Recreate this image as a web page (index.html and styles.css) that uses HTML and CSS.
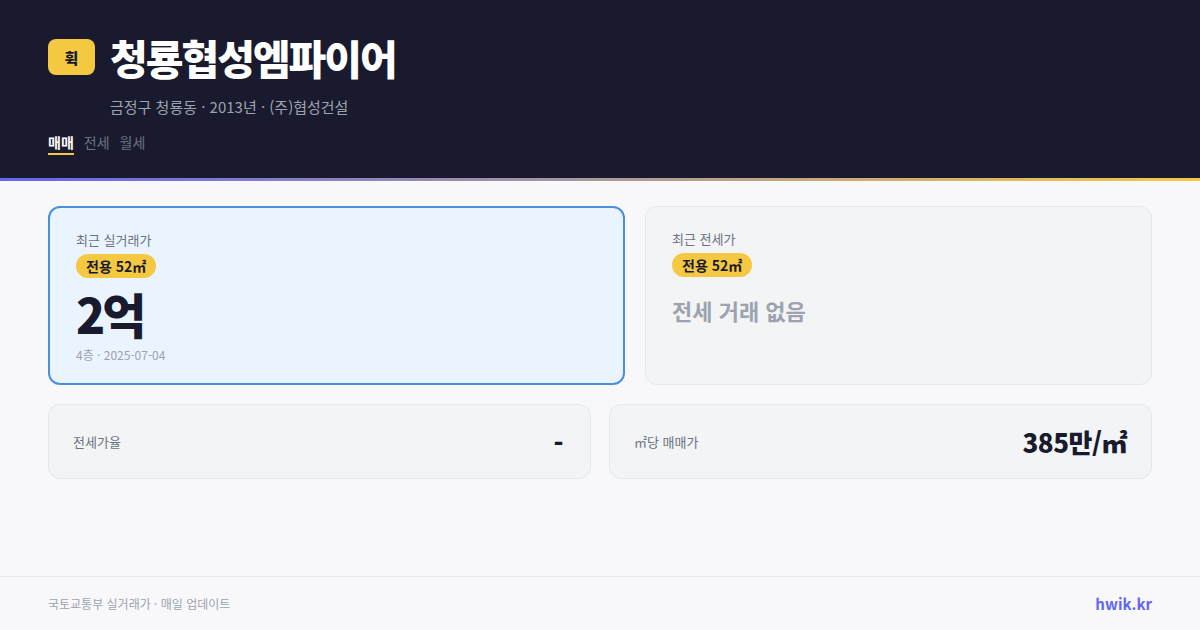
FILE: index.html
```html
<!DOCTYPE html>
<html lang="ko">
<head>
<meta charset="utf-8">
<link rel="stylesheet" href="styles.css">
</head>
<body>
<div class="page">
  <header class="hero">
    <div class="title-row">
      <div class="logo">휙</div>
      <h1 class="title">청룡협성엠파이어</h1>
    </div>
    <div class="sub">금정구 청룡동 · 2013년 · (주)협성건설</div>
    <nav class="tabs">
      <span class="tab active">매매</span>
      <span class="tab">전세</span>
      <span class="tab">월세</span>
    </nav>
  </header>
  <div class="accent"></div>
  <main class="content">
    <div class="row-top">
      <section class="card card-main">
        <div class="label">최근 실거래가</div>
        <span class="badge">전용 52㎡</span>
        <div class="price">2억</div>
        <div class="meta">4층 · 2025-07-04</div>
      </section>
      <section class="card card-alt">
        <div class="label">최근 전세가</div>
        <span class="badge">전용 52㎡</span>
        <div class="empty">전세 거래 없음</div>
      </section>
    </div>
    <div class="row-bottom">
      <section class="stat">
        <span class="stat-label">전세가율</span>
        <span class="stat-value dash">-</span>
      </section>
      <section class="stat">
        <span class="stat-label">㎡당 매매가</span>
        <span class="stat-value">385만/㎡</span>
      </section>
    </div>
  </main>
  <footer class="footer">
    <span class="source">국토교통부 실거래가 · 매일 업데이트</span>
    <span class="brand">hwik.kr</span>
  </footer>
</div>
</body>
</html>
```
FILE: styles.css
```css
* { box-sizing: border-box; margin: 0; padding: 0; }
html, body { width: 1200px; height: 630px; overflow: hidden; }
body {
  background: #f8f8fa;
  font-family: "Noto Sans CJK KR", "Noto Sans", sans-serif;
  color: #1a1a2e;
}
.page { display: flex; flex-direction: column; height: 630px; }
.hero {
  background: #1a1a2e;
  padding: 32px 48px 0;
  height: 178px;
}
.title-row { display: flex; align-items: center; gap: 15px; }
.logo {
  width: 47px; height: 36px;
  background: #f5c842;
  border-radius: 8px;
  display: flex; align-items: center; justify-content: center;
  font-size: 15px; font-weight: 900; color: #1a1a2e;
}
.title {
  font-size: 41px; font-weight: 900; color: #fff;
  letter-spacing: -2px; line-height: 50px;
}
.sub {
  margin: 15px 0 0 62px;
  font-size: 15px; color: #9ca3af; line-height: 20px;
}
.tabs { display: flex; gap: 10px; margin-top: 15px; }
.tab { font-size: 14px; color: #6b7280; line-height: 20px; padding-bottom: 1px; }
.tab.active { color: #fff; font-weight: 700; border-bottom: 2px solid #f5c842; }
.accent { height: 3px; background: linear-gradient(90deg, #6366f1, #f5c842); }
.content { flex: 1; padding: 25px 48px 0; display: flex; flex-direction: column; gap: 19px; }
.row-top { display: grid; grid-template-columns: 577fr 507fr; gap: 20px; }
.card {
  height: 179px;
  border-radius: 12px;
  padding: 23px 26px;
  display: flex; flex-direction: column; align-items: flex-start;
}
.card-main { background: #eaf4ff; border: 2px solid #4a90d9; }
.card-alt { background: #f3f4f6; border: 1px solid #e5e7eb; padding: 23px 26px; }
.label { font-size: 13px; color: #6b7280; line-height: 18px; }
.badge {
  margin-top: 5px;
  background: #f5c842; color: #1a1a2e;
  font-size: 14px; font-weight: 700;
  border-radius: 12px; padding: 0 10px; line-height: 24px;
}
.price { font-size: 48px; font-weight: 900; line-height: 62px; letter-spacing: -3px; margin-top: 4px; }
.meta { font-size: 12px; color: #9ca3af; line-height: 16px; margin-top: 3px; }
.empty { font-size: 22px; font-weight: 700; color: #9ca3af; margin-top: 18px; line-height: 30px; }
.row-bottom { display: grid; grid-template-columns: 1fr 1fr; gap: 18px; }
.stat {
  height: 75px;
  background: #f3f4f6; border: 1px solid #e5e7eb; border-radius: 12px;
  padding: 0 24px;
  display: flex; align-items: center; justify-content: space-between;
}
.stat-label { font-size: 13px; color: #6b7280; }
.stat-value { font-size: 26px; font-weight: 900; color: #1a1a2e; letter-spacing: -0.5px; }
.stat-value.dash { margin-right: 3px; }
.footer {
  height: 54px;
  border-top: 1px solid #e5e7eb;
  padding: 0 48px;
  display: flex; align-items: center; justify-content: space-between;
}
.source { font-size: 12px; color: #9ca3af; }
.brand { font-size: 15px; font-weight: 700; color: #6366f1; }
```
